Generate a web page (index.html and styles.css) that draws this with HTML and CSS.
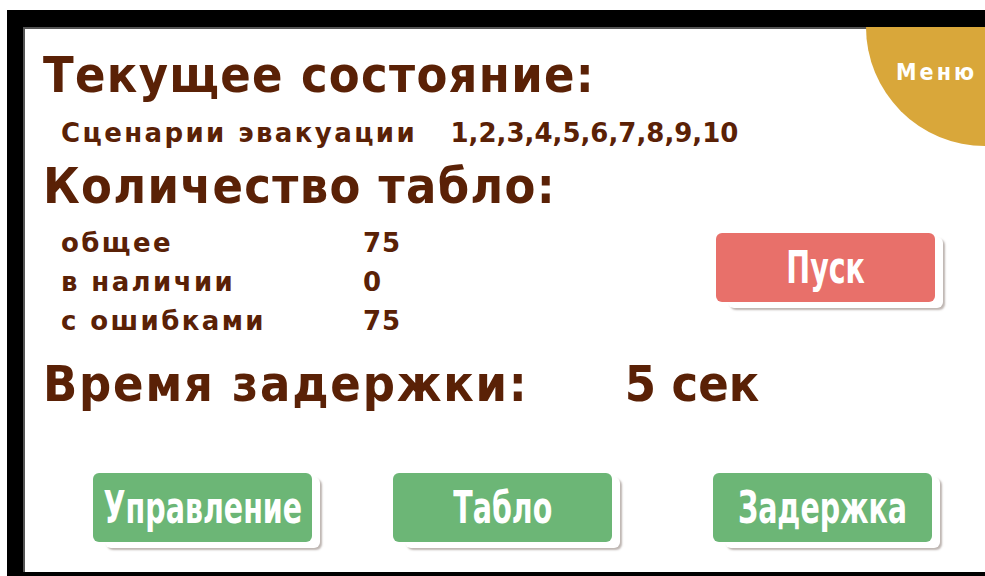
FILE: index.html
```html
<!DOCTYPE html>
<html lang="ru">
<head>
<meta charset="utf-8">
<title>Текущее состояние</title>
<link rel="stylesheet" href="styles.css">
</head>
<body>
<div class="frame">
  <div class="screen">
    <div class="menu"><span class="menu-label">Меню</span></div>
    <div class="content">
      <h1 class="title">Текущее состояние:</h1>
      <div class="scenario">
        <span class="scenario-label">Сценарии эвакуации</span>
        <span class="scenario-list">1,2,3,4,5,6,7,8,9,10</span>
      </div>
      <h2 class="title title-count">Количество табло:</h2>
      <div class="counts-row">
        <div class="counts">
          <span class="count-name">общее</span><span class="count-value">75</span>
          <span class="count-name">в наличии</span><span class="count-value">0</span>
          <span class="count-name">с ошибками</span><span class="count-value">75</span>
        </div>
        <button class="btn btn-red btn-start"><span class="btn-text">Пуск</span></button>
      </div>
      <div class="delay">
        <h2 class="title delay-label">Время задержки:</h2>
        <span class="title delay-value">5 сек</span>
      </div>
      <div class="actions">
        <button class="btn btn-green btn-control"><span class="btn-text">Управление</span></button>
        <button class="btn btn-green btn-boards"><span class="btn-text">Табло</span></button>
        <button class="btn btn-green btn-delay"><span class="btn-text">Задержка</span></button>
      </div>
    </div>
  </div>
</div>
</body>
</html>
```
FILE: styles.css
```css
* { box-sizing: border-box; }

html, body {
  margin: 0;
  background: #ffffff;
  width: 985px;
  height: 576px;
  overflow: hidden;
}

.frame {
  padding: 10px 0 0 7px;
}

/* the device screen with its dark bezel on the top, left and bottom */
.screen {
  position: relative;
  z-index: 0;
  width: 978px;
  height: 566px;
  border-top: 17px solid #000;
  border-left: 16px solid #000;
  border-bottom: 4px solid #000;
  overflow: hidden;
  box-shadow: inset 2px 2px 0 #555;
  background: #fff;
}

.menu {
  position: absolute;
  right: -119px;
  top: -119px;
  width: 238px;
  height: 238px;
  border-radius: 50%;
  background: #d9a73a;
}

.menu-label {
  position: absolute;
  left: 30px;
  top: 151px;
  color: #fff;
  font: bold 23px/26px "DejaVu Sans", sans-serif;
  font-stretch: condensed;
  letter-spacing: 3px;
}

.content {
  padding: 19px 50px 0 20px;
  color: #5a2106;
  font-family: "DejaVu Sans", sans-serif;
  font-weight: bold;
}

.title {
  margin: 0;
  font-family: "DejaVu Sans", sans-serif;
  font-stretch: condensed;
  font-weight: bold;
  font-size: 50px;
  line-height: 58px;
  letter-spacing: 1.3px;
}

.scenario {
  margin-top: 11px;
  padding-left: 18px;
  font-size: 26px;
  line-height: 36px;
  letter-spacing: 2.4px;
  white-space: nowrap;
}

.scenario-list {
  margin-left: 22px;
  letter-spacing: 0;
}

.title-count {
  margin-top: 6px;
}

.counts-row {
  display: flex;
  align-items: flex-start;
  margin-top: 9px;
}

.counts {
  display: grid;
  grid-template-columns: 302px auto;
  padding-left: 18px;
  font-size: 26px;
  line-height: 39px;
  letter-spacing: 2.4px;
}

.count-value {
  letter-spacing: 1px;
}

.delay {
  display: flex;
  margin-top: 14px;
}

.delay-label {
  letter-spacing: 1.8px;
}

.delay-value {
  margin-left: 96px;
  letter-spacing: 0;
}

.btn {
  position: relative;
  width: 219px;
  height: 69px;
  border: 0;
  border-radius: 6px;
  color: #fff;
  padding: 0;
  font-family: "DejaVu Sans", sans-serif;
  font-stretch: condensed;
  font-size: 44px;
  font-weight: bold;
  line-height: 66px;
  white-space: nowrap;
}

/* narrow lettering on the buttons */
.btn-text {
  display: inline-block;
  transform: scaleX(0.72);
  margin: 0 -40px;
}

/* pale card edge sitting behind each button */
.btn::after {
  content: "";
  position: absolute;
  left: 12px;
  top: 4px;
  right: -8px;
  bottom: -6px;
  border-radius: 6px;
  background: #fff;
  box-shadow: 2px 2px 2px rgba(90, 70, 60, 0.4);
  z-index: -1;
}

.btn-red { background: #e8706a; }
.btn-green { background: #6cb676; }

.btn-start {
  margin-left: auto;
  margin-top: 9px;
}

.actions {
  display: flex;
  margin-top: 60px;
  padding-left: 50px;
}

.btn-boards { margin-left: 81px; }
.btn-delay { margin-left: 101px; }
```
